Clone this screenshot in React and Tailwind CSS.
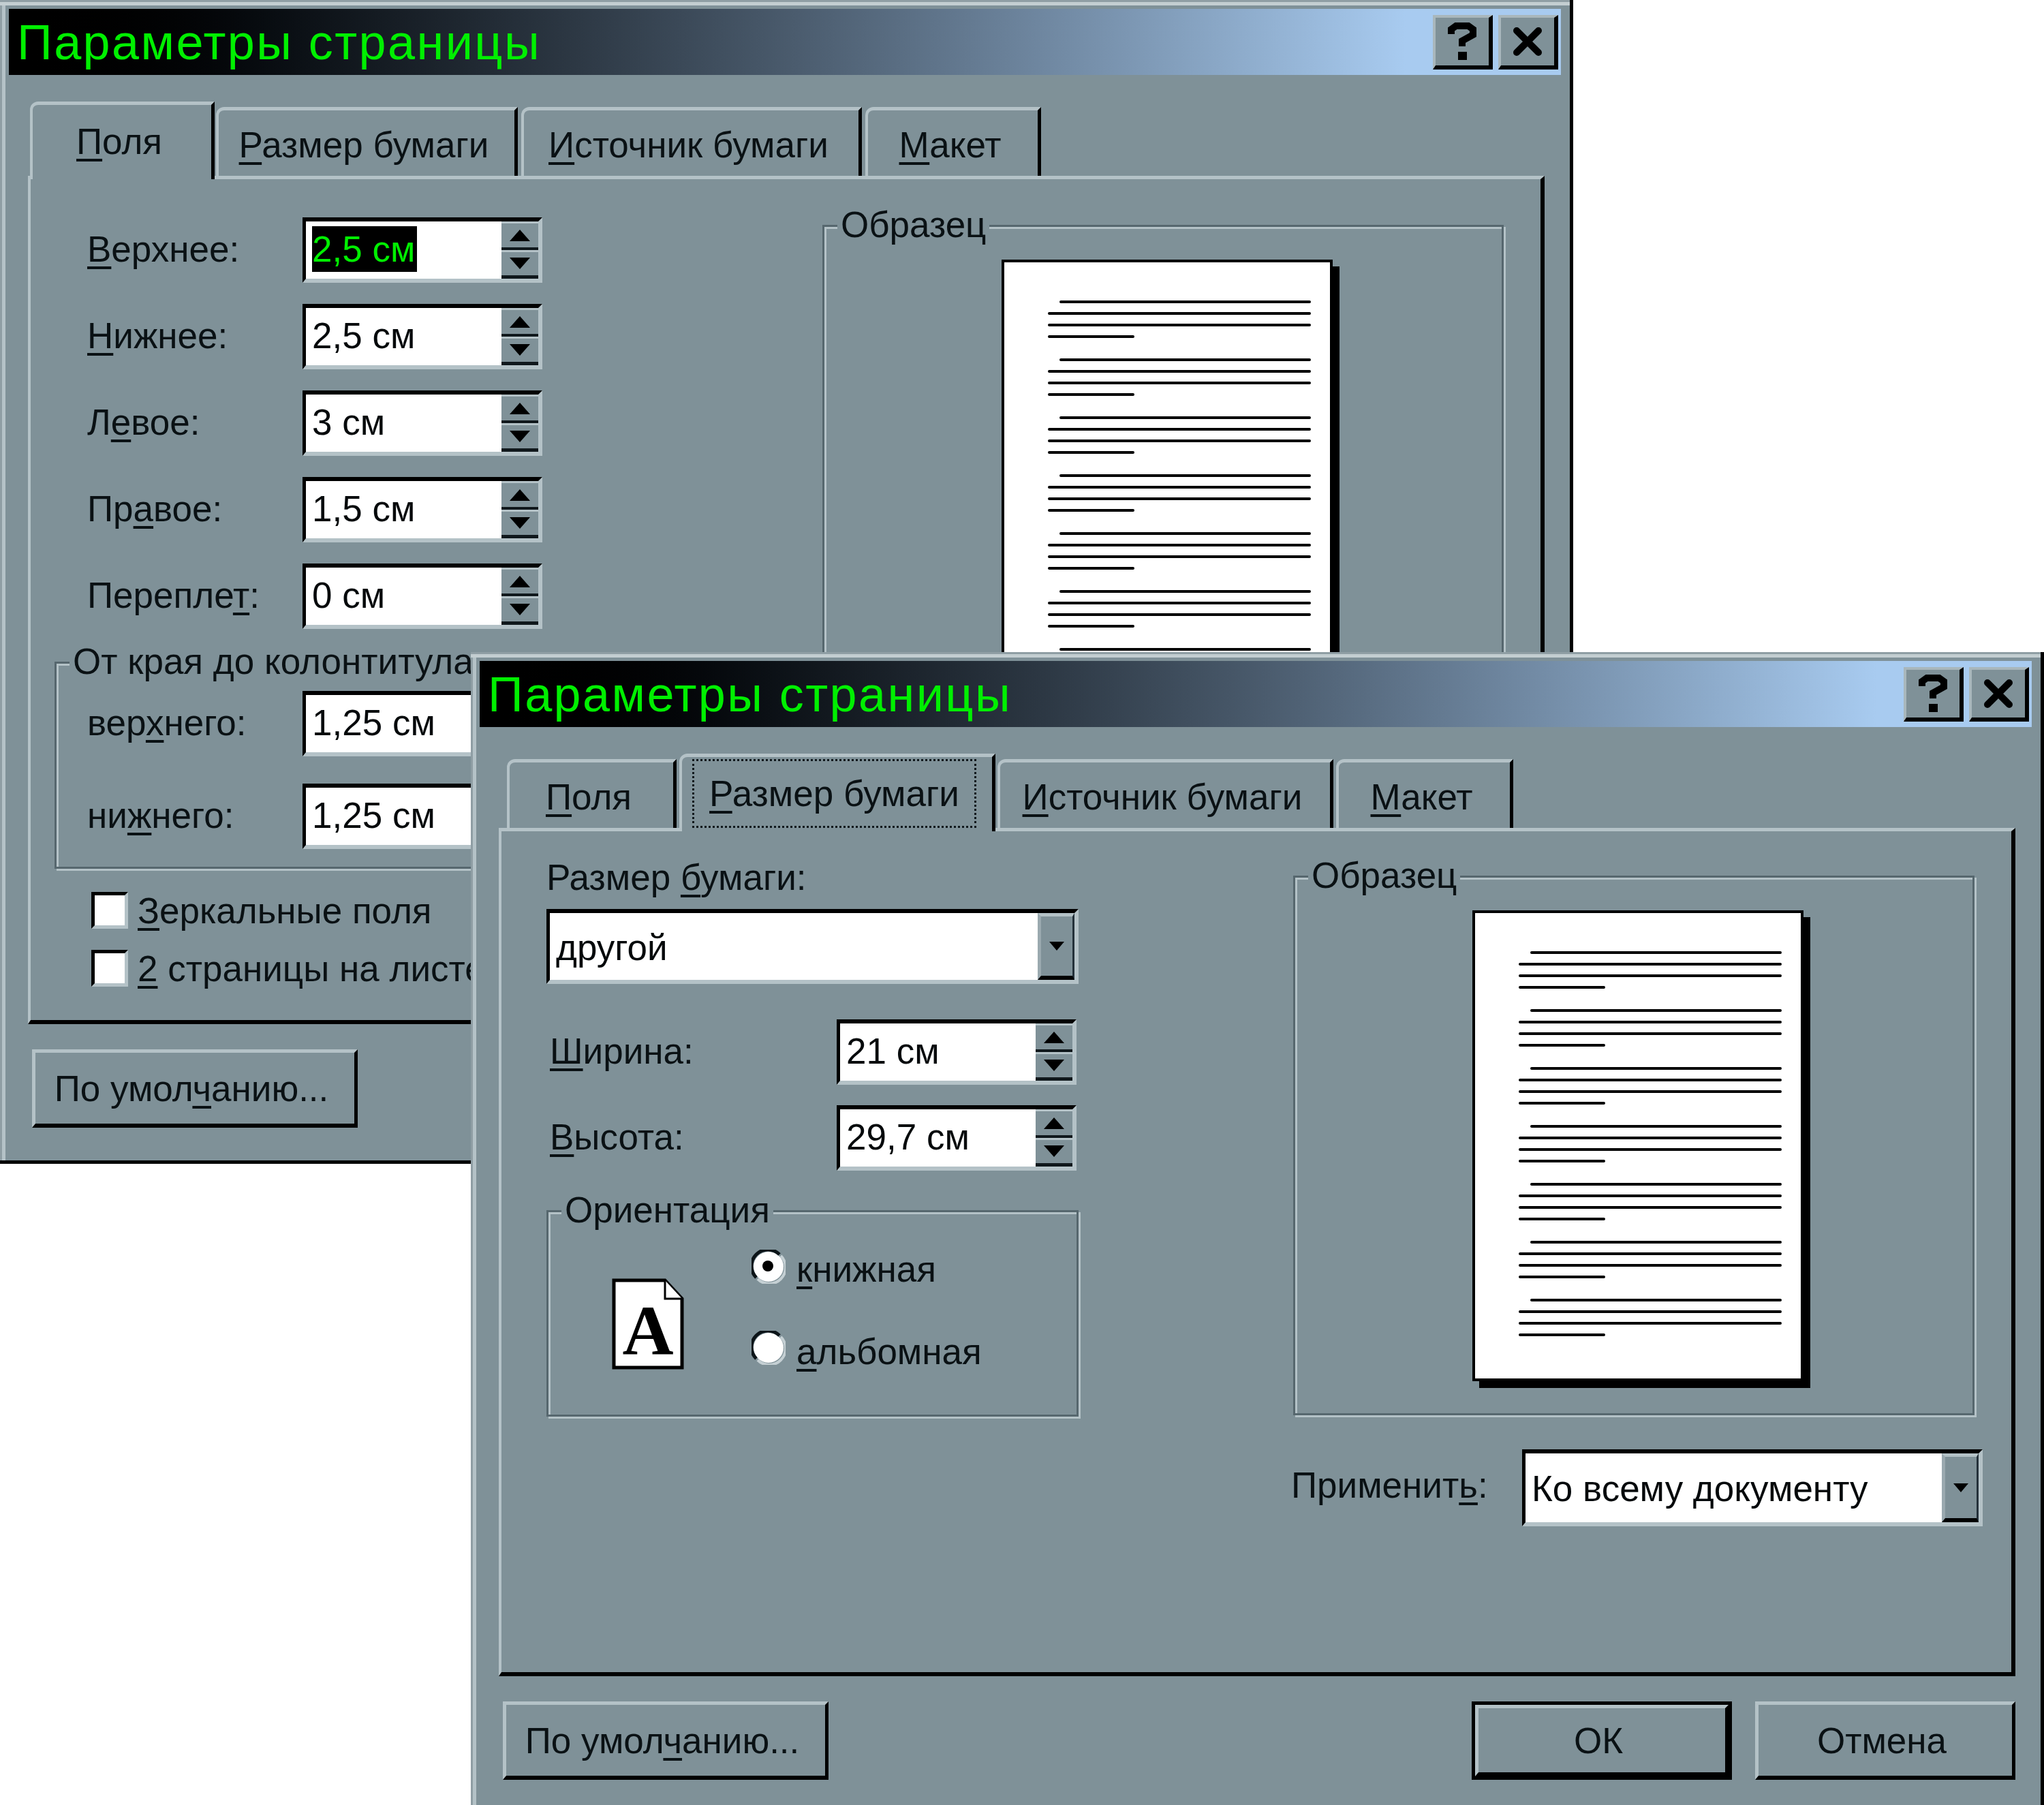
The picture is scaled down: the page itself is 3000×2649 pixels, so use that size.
import React from "react";

const U = ({ children }) => (
  <u className="underline decoration-[4px] underline-offset-[7px] [text-decoration-skip-ink:none]">{children}</u>
);

const raised = "border-t-[5px] border-l-[5px] border-r-[5px] border-b-[6px] border-t-[#b4c2c7] border-l-[#b4c2c7] border-r-black border-b-black";
const sunken = "border-t-[6px] border-l-[5px] border-r-[6px] border-b-[6px] border-t-black border-l-black border-r-[#b4c2c7] border-b-[#b4c2c7]";

const Tri = ({ down, className }) => (
  <svg viewBox="0 0 24 14" preserveAspectRatio="none" className={className}>
    <polygon points={down ? "0,0 24,0 12,14" : "12,0 24,14 0,14"} fill="#000" />
  </svg>
);

const SpinField = ({ value, selected }) => (
  <div className={`flex h-[96px] w-[352px] shrink-0 bg-white ${sunken}`}>
    <div className="flex flex-1 items-center pb-[3px] pl-[9px] text-[#05090b]">
      {selected ? (
        <span className="flex h-[67px] w-[154px] items-center bg-black text-[#00f000]">{value}</span>
      ) : (
        <span>{value}</span>
      )}
    </div>
    <div className="flex w-[54px] flex-col bg-[#7f9198]">
      <div className="flex flex-1 items-center justify-center border-t-[3px] border-[#b4c2c7] border-b-[4px] border-b-[#10181c]">
        <Tri className="h-[17px] w-[30px]" />
      </div>
      <div className="flex flex-1 items-center justify-center border-t-[3px] border-[#b4c2c7] border-b-[5px] border-b-[#10181c]">
        <Tri down className="h-[17px] w-[30px]" />
      </div>
    </div>
  </div>
);

const Combo = ({ value, className }) => (
  <div className={`flex bg-white ${sunken} ${className}`}>
    <div className="flex flex-1 items-center pl-[9px] pt-[2px] text-[#05090b]">{value}</div>
    <div className="flex w-[54px] items-center justify-center border-t-[5px] border-l-[5px] border-t-[#b4c2c7] border-l-[#9aa9af] border-b-[6px] border-b-black border-r-[3px] border-r-[#24313a] bg-[#7f9198]">
      <Tri down className="h-[13px] w-[22px]" />
    </div>
  </div>
);

const Group = ({ title, className, children }) => (
  <div className={`relative border-[3px] border-[#56676e] shadow-[inset_3px_3px_0_#b4c2c7,3px_3px_0_#b4c2c7] ${className}`}>
    <span className="absolute left-[19px] top-[-34px] h-[62px] bg-[#7f9198] px-[5px] leading-[62px] whitespace-nowrap">{title}</span>
    {children}
  </div>
);

const PagePreview = () => (
  <div className="ml-[260px] mt-[48px] flex h-[691px] w-[486px] flex-col gap-[30px] border-[4px] border-black bg-white pl-[64px] pt-[56px] shadow-[10px_10px_0_#000]">
    {[0, 1, 2, 3, 4, 5, 6].map((p) => (
      <div key={p} className="flex flex-col gap-[13px]">
        <div className="ml-[17px] h-[4px] w-[369px] rounded-full bg-black" />
        <div className="h-[4px] w-[386px] rounded-full bg-black" />
        <div className="h-[4px] w-[386px] rounded-full bg-black" />
        <div className="h-[4px] w-[127px] rounded-full bg-black" />
      </div>
    ))}
  </div>
);

const Sample = () => (
  <Group title="Образец" className="h-[792px] w-[1000px]">
    <PagePreview />
  </Group>
);

const Tab = ({ active, className, children }) => (
  <div
    className={`relative flex shrink-0 items-center justify-center rounded-tl-[12px] border-t-[5px] border-l-[4px] border-r-[5px] border-t-[#b4c2c7] border-l-[#b4c2c7] border-r-black pr-[8px] whitespace-nowrap ${
      active ? "z-10 -mb-[5px] h-[114px] bg-[#7f9198] pb-[2px]" : "h-[101px] pt-[4px]"
    } ${className}`}
  >
    {children}
  </div>
);

const Btn = ({ className, children }) => (
  <div className={`flex items-center justify-center pr-[10px] ${raised} ${className}`}>{children}</div>
);

const TitleBtn = ({ children }) => (
  <div className="flex h-[80px] w-[88px] items-center justify-center border-t-[4px] border-l-[4px] border-b-[6px] border-r-[6px] border-t-[#a9b7bc] border-l-[#a9b7bc] border-b-black border-r-black bg-[#7f9198]">
    {children}
  </div>
);

const Dialog = ({ className, tabs, children }) => (
  <div className={`absolute flex h-[1708px] w-[2309px] flex-col bg-[#7f9198] pl-[13px] pr-[13px] pt-[13px] border-r-[5px] border-b-[5px] border-black shadow-[inset_0_3px_0_#8f9ea4,inset_0_8px_0_#c3ced1,inset_3px_0_0_#8f9ea4,inset_8px_0_0_#b4c2c7] ${className}`}>
    <div className="flex h-[97px] shrink-0 items-center justify-between bg-gradient-to-r from-black to-[#a8cbf0] to-90% pl-[12px] pr-[4px]">
      <span className="text-[72px] leading-none tracking-[2.4px] text-[#00f000] [font-family:'Liberation_Sans',sans-serif]">Параметры страницы</span>
      <div className="flex gap-[8px]">
        <TitleBtn>
          <svg viewBox="0 0 42 56" className="h-[56px] w-[42px]" fill="none" stroke="#000" strokeWidth="10">
            <path d="M5 17 V10 L12 5 H30 L37 10 V18 L21 27 V35" />
            <rect x="15" y="43" width="13" height="12" fill="#000" stroke="none" />
          </svg>
        </TitleBtn>
        <TitleBtn>
          <svg viewBox="0 0 42 42" className="h-[42px] w-[42px]" stroke="#000" strokeWidth="10" strokeLinecap="round">
            <path d="M5 5 L37 37 M37 5 L5 37" />
          </svg>
        </TitleBtn>
      </div>
    </div>
    <div className="flex h-[148px] shrink-0 items-end pl-[31px]">{tabs}</div>
    <div className="relative flex h-[1245px] shrink-0 flex-col border-t-[5px] border-l-[4px] border-t-[#b4c2c7] border-l-[#b4c2c7] border-r-[6px] border-b-[6px] border-r-black border-b-black ml-[28px] mr-[24px]">
      {children}
    </div>
    <div className="mt-[37px] flex shrink-0 pl-[34px] pr-[24px]">
      <Btn className="h-[115px] w-[478px]"><span>По умол<U>ч</U>анию...</span></Btn>
      <div className="ml-auto flex gap-[34px]">
        <div className="h-[115px] border-[5px] border-black">
          <Btn className="h-[105px] w-[372px]">ОК</Btn>
        </div>
        <Btn className="h-[115px] w-[382px]">Отмена</Btn>
      </div>
    </div>
  </div>
);

const LabelRow = ({ label, value, selected }) => (
  <div className="flex items-center">
    <span className="w-[316px] shrink-0 whitespace-nowrap pb-[3px]">{label}</span>
    <SpinField value={value} selected={selected} />
  </div>
);

const Check = ({ label }) => (
  <div className="flex items-center">
    <div className="h-[54px] w-[54px] shrink-0 bg-white border-t-[5px] border-l-[5px] border-r-[5px] border-b-[5px] border-t-black border-l-black border-r-[#b4c2c7] border-b-[#b4c2c7]" />
    <span className="ml-[14px] whitespace-nowrap pt-[2px]">{label}</span>
  </div>
);

const BackPanel = () => (
  <div className="flex">
    <div className="flex w-[1162px] shrink-0 flex-col pl-[83px] pt-[56px]">
      <div className="flex flex-col gap-[31px]">
        <LabelRow label={<><U>В</U>ерхнее:</>} value="2,5 см" selected />
        <LabelRow label={<><U>Н</U>ижнее:</>} value="2,5 см" />
        <LabelRow label={<>Л<U>е</U>вое:</>} value="3 см" />
        <LabelRow label={<>Пр<U>а</U>вое:</>} value="1,5 см" />
        <LabelRow label={<>Перепле<U>т</U>:</>} value="0 см" />
      </div>
      <Group
        title="От края до колонтитула"
        className="-ml-[48px] mt-[48px] flex h-[304px] w-[855px] flex-col gap-[40px] pl-[45px] pt-[40px]"
      >
        <LabelRow label={<>вер<U>х</U>него:</>} value="1,25 см" />
        <LabelRow label={<>ни<U>ж</U>него:</>} value="1,25 см" />
      </Group>
      <div className="mt-[33px] flex flex-col gap-[30px] pl-[6px]">
        <Check label={<><U>З</U>еркальные поля</>} />
        <Check label={<><U>2</U> страницы на листе</>} />
      </div>
    </div>
    <div className="pt-[67px]">
      <Sample />
    </div>
  </div>
);

const FrontPanel = () => (
  <div className="flex">
    <div className="flex w-[1162px] shrink-0 flex-col pl-[66px] pt-[37px]">
      <span className="h-[62px] leading-[62px]">Размер <U>б</U>умаги:</span>
      <Combo value="другой" className="mt-[15px] h-[110px] w-[781px]" />
      <div className="mt-[52px] flex flex-col gap-[30px] pl-[5px]">
        <div className="flex items-center">
          <span className="w-[421px] shrink-0 pb-[3px]"><U>Ш</U>ирина:</span>
          <SpinField value="21 см" />
        </div>
        <div className="flex items-center">
          <span className="w-[421px] shrink-0 pb-[3px]"><U>В</U>ысота:</span>
          <SpinField value="29,7 см" />
        </div>
      </div>
      <Group title="Ориентация" className="mt-[58px] flex h-[303px] w-[781px] items-center pl-[93px]">
        <svg viewBox="0 0 106 134" className="mt-[30px] h-[134px] w-[106px] shrink-0">
          <path d="M3 3 H78 L103 30 V131 H3 Z" fill="#fff" stroke="#000" strokeWidth="5" />
          <path d="M78 3 V30 H103" fill="#fff" stroke="#000" strokeWidth="3" />
          <text x="53" y="112" textAnchor="middle" fontSize="104" fontWeight="700" fontFamily="'Liberation Serif', serif" fill="#000">A</text>
        </svg>
        <div className="-mt-[12px] ml-[99px] flex flex-col gap-[64px]">
          <div className="flex items-start">
            <svg viewBox="0 0 50 50" className="h-[50px] w-[50px] shrink-0">
              <circle cx="25" cy="25" r="22" fill="#fff" />
              <path d="M7 41 A22 22 0 0 1 41 7" fill="none" stroke="#0c1418" strokeWidth="5" />
              <path d="M9 43 A22 22 0 0 0 43 9" fill="none" stroke="#c5d0d4" strokeWidth="4" />
              <circle cx="24" cy="24" r="8" fill="#000" />
            </svg>
            <span className="ml-[16px] mt-[2px]"><U>к</U>нижная</span>
          </div>
          <div className="flex items-start">
            <svg viewBox="0 0 50 50" className="h-[50px] w-[50px] shrink-0">
              <circle cx="25" cy="25" r="22" fill="#fff" />
              <path d="M7 41 A22 22 0 0 1 41 7" fill="none" stroke="#0c1418" strokeWidth="5" />
              <path d="M9 43 A22 22 0 0 0 43 9" fill="none" stroke="#c5d0d4" strokeWidth="4" />
            </svg>
            <span className="ml-[16px] mt-[4px]"><U>а</U>льбомная</span>
          </div>
        </div>
      </Group>
    </div>
    <div className="flex flex-col pt-[65px]">
      <Sample />
      <div className="-ml-[3px] mt-[50px] flex items-center">
        <span className="w-[339px] shrink-0 pb-[8px]">Применит<U>ь</U>:</span>
        <Combo value="Ко всему документу" className="h-[113px] w-[676px]" />
      </div>
    </div>
  </div>
);

export default function App() {
  return (
    <div className="relative h-[2649px] w-[3000px] overflow-hidden bg-white text-[53px] leading-none text-[#0a1114] [font-family:'Liberation_Sans',sans-serif]">
      <Dialog
        className="left-0 top-0"
        tabs={
          <>
            <Tab active className="w-[271px]"><span><U>П</U>оля</span></Tab>
            <Tab className="ml-[2px] w-[443px]"><span><U>Р</U>азмер бумаги</span></Tab>
            <Tab className="ml-[5px] w-[500px]"><span><U>И</U>сточник бумаги</span></Tab>
            <Tab className="ml-[5px] w-[258px]"><span><U>М</U>акет</span></Tab>
          </>
        }
      >
        <BackPanel />
      </Dialog>
      <Dialog
        className="left-[691px] top-[957px]"
        tabs={
          <>
            <Tab className="ml-[9px] w-[249px]"><span><U>П</U>оля</span></Tab>
            <Tab active className="ml-[4px] w-[464px]">
              <span className="border-[3px] border-dotted border-[#10181c] px-[22px] py-[21px]"><U>Р</U>азмер бумаги</span>
            </Tab>
            <Tab className="ml-[3px] w-[493px]"><span><U>И</U>сточник бумаги</span></Tab>
            <Tab className="ml-[4px] w-[260px]"><span><U>М</U>акет</span></Tab>
          </>
        }
      >
        <FrontPanel />
      </Dialog>
    </div>
  );
}
